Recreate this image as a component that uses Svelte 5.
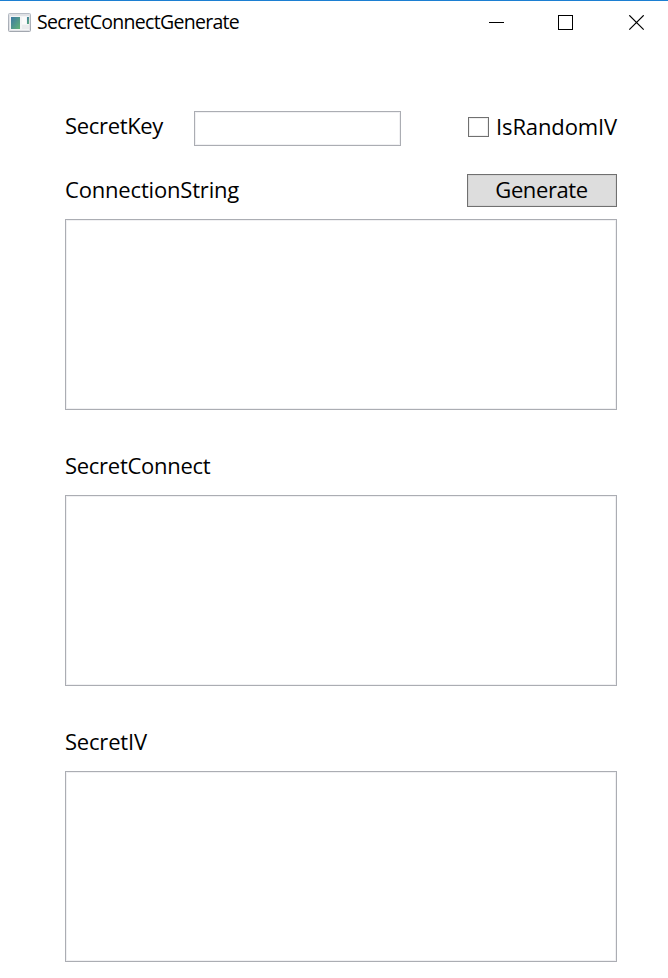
<script>
  let secretKey = $state('');
  let randomIV = $state(false);
  let connectionString = $state('');
  let secretConnect = $state('');
  let secretIV = $state('');
</script>

<main class="window">
  <header>
    <svg class="app-icon" width="23" height="19" viewBox="0 0 23 19" aria-hidden="true">
      <defs>
        <linearGradient id="pane" x1="0" y1="0" x2="1" y2="1">
          <stop offset="0" stop-color="#3d78a4" />
          <stop offset="1" stop-color="#62b476" />
        </linearGradient>
        <linearGradient id="frame" x1="0" y1="0" x2="0" y2="1">
          <stop offset="0" stop-color="#b6bcc5" />
          <stop offset="1" stop-color="#a2a7af" />
        </linearGradient>
      </defs>
      <rect x="0.5" y="0.5" width="22" height="18" rx="1" fill="#dfe1e5" stroke="url(#frame)" />
      <rect x="2" y="3" width="19" height="14" fill="#f3f4f5" />
      <rect x="3" y="4" width="9" height="12" fill="url(#pane)" />
      <rect x="14" y="4" width="4" height="7" fill="#fbfbfb" />
      <rect x="19" y="4" width="2" height="7" fill="url(#pane)" />
      <rect x="14" y="12" width="7" height="4" fill="#e9eaec" />
    </svg>
    <span class="title">SecretConnectGenerate</span>
    <svg class="controls" width="156" height="16" viewBox="0 0 156 16" fill="none" stroke="#000" aria-hidden="true">
      <path d="M0 7.5H15" />
      <rect x="69.5" y="0.5" width="14" height="14" />
      <path d="M140.3 0.3L154.7 14.7M154.7 0.3L140.3 14.7" stroke-width="1.2" />
    </svg>
  </header>

  <section class="key-row">
    <label class="w-key" for="key">SecretKey</label>
    <input id="key" class="field" type="text" bind:value={secretKey} />
    <label class="check">
      <input type="checkbox" bind:checked={randomIV} />
      <span>IsRandomIV</span>
    </label>
  </section>

  <section class="heading">
    <label class="w-string" for="connection">ConnectionString</label>
    <button type="button"><span>Generate</span></button>
  </section>
  <textarea id="connection" class="field" bind:value={connectionString}></textarea>

  <section class="heading lower">
    <label class="w-connect" for="connect">SecretConnect</label>
  </section>
  <textarea id="connect" class="field" bind:value={secretConnect}></textarea>

  <section class="heading lower">
    <label class="w-iv" for="iv">SecretIV</label>
  </section>
  <textarea id="iv" class="field" bind:value={secretIV}></textarea>
</main>

<style>
  .window {
    box-sizing: border-box;
    width: 668px;
    height: 978px;
    overflow: hidden;
    padding: 0 51px 0 65px;
    border-top: 1px solid #1c7fd2;
    background: #fff;
    color: #000;
    font: 22px/30px "Open Sans", "Noto Sans", sans-serif;
  }
  header {
    display: flex;
    align-items: center;
    height: 43px;
    margin: 0 -40px 0 -57px;
  }
  .app-icon { margin-right: 6px; }
  .title { font-size: 19.5px; line-height: 26px; letter-spacing: -0.7px; padding-bottom: 2px; }
  .controls { margin-left: auto; margin-right: 12px; }
  .key-row {
    display: flex;
    height: 36px;
    margin-top: 66px;
  }
  .w-key { flex: none; width: 129px; letter-spacing: -0.33px; }
  .field {
    display: block;
    box-sizing: border-box;
    margin: 0;
    padding: 3px;
    border: 1px solid #abadb3;
    border-radius: 0;
    outline: none;
    background: #fff;
    box-shadow: inset 0 0 0 1px #f1f1f3;
    font: inherit;
  }
  .key-row .field { flex: none; width: 207px; height: 35px; margin-top: 1px; }
  .check {
    display: flex;
    flex: none;
    margin-left: 67px;
    letter-spacing: -0.12px;
    white-space: nowrap;
  }
  .check input {
    appearance: none;
    box-sizing: border-box;
    flex: none;
    width: 21px;
    height: 20px;
    margin: 7px 7px 0 0;
    border: 1px solid #707070;
    background: #fff;
    box-shadow: inset 0 0 0 1px #f0f0f0;
  }
  .check span { margin-top: 1px; }
  .heading {
    display: flex;
    align-items: flex-start;
    justify-content: space-between;
    height: 45px;
    margin-top: 28px;
  }
  .lower { height: 45px; margin-top: 40px; }
  .w-string { letter-spacing: -0.18px; }
  .w-connect { letter-spacing: -0.28px; }
  .w-iv { letter-spacing: -0.2px; }
  button {
    box-sizing: border-box;
    width: 150px;
    height: 33px;
    padding: 0 1px 3px 0;
    border: 1px solid #707070;
    box-shadow: inset 0 0 0 1px #d3d3d3;
    border-radius: 0;
    background: #ddd;
    color: #000;
    font: inherit;
    line-height: 28px;
    letter-spacing: -0.4px;
  }
  textarea {
    width: 552px;
    height: 191px;
    resize: none;
  }
</style>
